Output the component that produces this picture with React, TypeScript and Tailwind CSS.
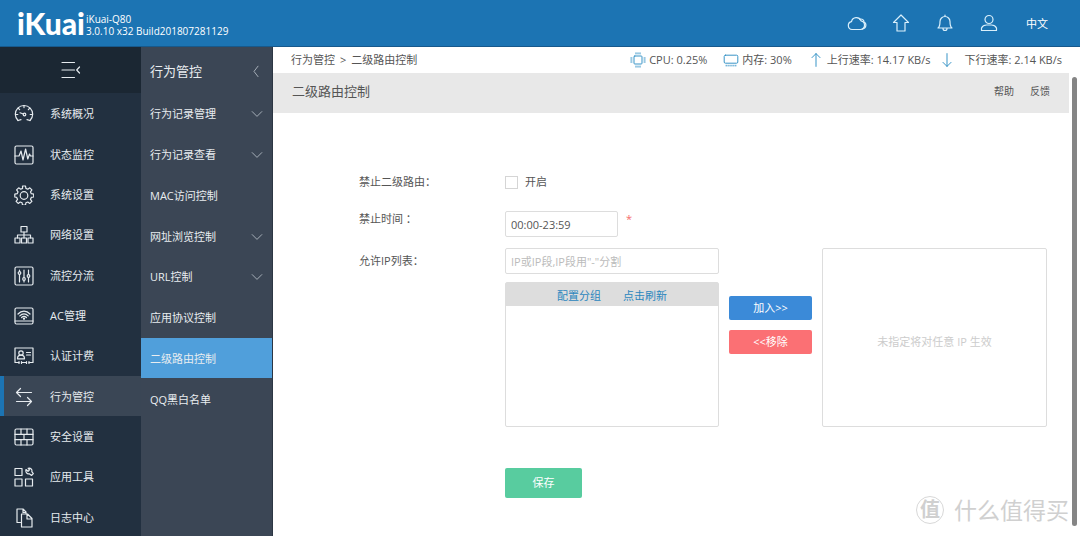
import { ReactNode, useState } from 'react';
import clsx from 'clsx';

type IconProps = { children: ReactNode; className?: string };

const Icon = ({ children, className = 'size-5' }: IconProps) => (
  <svg
    className={clsx('shrink-0', className)}
    viewBox="0 0 20 20"
    fill="none"
    stroke="currentColor"
    strokeWidth="1.2"
    strokeLinecap="round"
    strokeLinejoin="round"
    aria-hidden="true"
  >
    {children}
  </svg>
);

const subTitle = '行为管控';

const mainMenu: { label: string; icon: ReactNode }[] = [
  {
    label: '系统概况',
    icon: (
      <>
        <path d="M4 16.5a8.700 8.700 0 1 1 12 0" />
        <path d="M4 16.500l3-.8M16 16.500l-3-.8M1.600 10.500h2.200M16.200 10.500h2.200M10 1.600v2M4.200 4.200l1.400 1.500M15.800 4.200l-1.400 1.500" />
        <circle cx="10.500" cy="10.500" r="1.300" />
        <path d="M9.300 10L6 8.800" />
      </>
    ),
  },
  {
    label: '状态监控',
    icon: (
      <>
        <rect x="1" y="1" width="18" height="18" rx="1.500" />
        <path d="M1 11h4l2-5 2 9 2.600-11 2.200 10 1.700-5 1 2h2.500" />
      </>
    ),
  },
  {
    label: '系统设置',
    icon: (
      <>
        <path d="M8.500 1h3l.4 2.400 1.900.8 2-1.400 2.100 2.100-1.400 2 .8 1.800 2.400.4v2.900l-2.400.4-.8 1.900 1.400 2-2.100 2.100-2-1.400-1.900.8-.4 2.300h-3l-.4-2.300-1.900-.8-2 1.400-2.100-2.100 1.400-2-.8-1.900L.8 12V9.100l2.400-.4.8-1.800-1.400-2 2.100-2.100 2 1.400 1.900-.8z" />
        <circle cx="10" cy="10.500" r="3.800" />
      </>
    ),
  },
  {
    label: '网络设置',
    icon: (
      <>
        <rect x="7" y="1.500" width="6" height="5.500" />
        <path d="M10 7v6M3.500 13v-3h13v3" />
        <rect x="1" y="13" width="5" height="5" />
        <rect x="7.500" y="13" width="5" height="5" />
        <rect x="14" y="13" width="5" height="5" />
      </>
    ),
  },
  {
    label: '流控分流',
    icon: (
      <>
        <rect x="1" y="1" width="18" height="18" rx="1.500" />
        <path d="M5.500 4v1.500M5.500 8.500V16M10 4v7.500M10 14.500V16M14.500 4v4.500M14.500 11.500V16" />
        <circle cx="5.500" cy="7" r="1.300" />
        <circle cx="10" cy="13" r="1.300" />
        <circle cx="14.500" cy="10" r="1.300" />
      </>
    ),
  },
  {
    label: 'AC管理',
    icon: (
      <>
        <rect x="1" y="2" width="18" height="16" rx="1.500" />
        <path d="M1 15h18M4 8c3.500-3.800 8.500-3.800 12 0M5.800 9.800c2.500-2.600 5.900-2.600 8.400 0M7.600 11.500c1.500-1.500 3.300-1.500 4.800 0" />
        <circle cx="10" cy="12.600" r=".6" fill="currentColor" />
      </>
    ),
  },
  {
    label: '认证计费',
    icon: (
      <>
        <path d="M5 16.500H1V2h18v14.500h-4M7.500 16.500h5" />
        <path d="M5 15.500v2M7.500 15.500v2M12.500 15.500v2M15 15.500v2M12.500 6.500h4M12.500 9h4" />
        <circle cx="7" cy="7" r="2.200" />
        <path d="M3.500 12.800c0-4.800 7-4.800 7 0z" />
      </>
    ),
  },
  {
    label: '行为管控',
    icon: <path d="M17.500 5.500H2.500M6.500 1.500l-4 4 4 4M2.500 14.500h15M13.500 10.500l4 4-4 4" />,
  },
  {
    label: '安全设置',
    icon: (
      <>
        <rect x="1" y="2" width="18" height="16" rx="1.500" />
        <path d="M1 7.300h18M1 12.700h18M7 2v5.300M13 2v5.300M10 7.300v5.400M7 12.700V18M13 12.700V18" />
      </>
    ),
  },
  {
    label: '应用工具',
    icon: (
      <>
        <rect x="1" y="1.500" width="7" height="7" />
        <rect x="1" y="12" width="7" height="7" />
        <rect x="11.500" y="12" width="7" height="7" />
        <path d="M12 2.500l2 1.800 1.500-1.500-1.300-1.500c2.500-.6 4.300 1.200 3.600 3.400l1.500 2-1.800 1.800-2.200-1.700c-2.200.6-4-1.500-3.300-4.300z" />
      </>
    ),
  },
  {
    label: '日志中心',
    icon: (
      <>
        <path d="M6.500 14.500H3V1h6l3 3v1.500M9 1v3.500h3" />
        <path d="M7.500 6h6l4.500 4.500V19H7.500zM13 6v5h5" />
      </>
    ),
  },
];

const subMenu = [
  { label: '行为记录管理', expandable: true },
  { label: '行为记录查看', expandable: true },
  { label: 'MAC访问控制' },
  { label: '网址浏览控制', expandable: true },
  { label: 'URL控制', expandable: true },
  { label: '应用协议控制' },
  { label: '二级路由控制' },
  { label: 'QQ黑白名单' },
];

const Header = () => (
  <header className="flex h-[47px] shrink-0 items-center border-b border-[#17598c] bg-[#1c74b3] pr-8 pl-[17px] text-white">
    <div className="w-[66px] font-['Lato'] text-[30px] leading-8 font-black">iKuai</div>
    <div className="ml-[3px] pt-1 text-[10px] leading-3">
      <div>iKuai-Q80</div>
      <div>3.0.10 x32 Build201807281129</div>
    </div>
    <nav className="ml-auto flex items-center gap-6 text-[#d9effb]">
      <button type="button" aria-label="云">
        <Icon>
          <path d="M5 16.500a4 4 0 0 1-.5-7.900 5 5 0 0 1 9.500-.8 4.400 4.400 0 0 1-.5 8.700z" />
          <path d="M12.500 6.200c3-.8 4.500 1 4.600 3 2.600 1 2.600 5.800-1.600 6.800" />
        </Icon>
      </button>
      <button type="button" aria-label="升级">
        <Icon>
          <path d="M10 2l7.500 7.500H14V18H6V9.500H2.500z" />
        </Icon>
      </button>
      <button type="button" aria-label="通知">
        <Icon>
          <path d="M10 2v1.500M3 15c2-1.500 2-3.500 2-6.500a5 5 0 0 1 10 0c0 3 0 5 2 6.500zM8 15.500a2 2 0 0 0 4 0" />
        </Icon>
      </button>
      <button type="button" aria-label="用户">
        <Icon>
          <circle cx="10" cy="6.500" r="4" />
          <path d="M2.500 17.500v-2.500c1.500-3 3-3 5-3h5c2 0 3.500 0 5 3v2.500z" />
        </Icon>
      </button>
      <button type="button" className="pt-[2px] pl-[3px] text-[11px] text-white">
        中文
      </button>
    </nav>
  </header>
);

const MainNav = () => (
  <aside className="w-[141px] shrink-0 overflow-hidden bg-[#223040] text-[#e6ebef]">
    <button type="button" aria-label="收起菜单" className="flex h-[46px] w-full items-center justify-center bg-[#1b2733]">
      <Icon>
        <path d="M1 2.500h12.500M1 10h12.500M1 17.500h12.500M18.500 7l-2.800 3 2.800 3" />
      </Icon>
    </button>
    <ul className="flex h-[444px] flex-col">
      {mainMenu.map(({ label, icon }) => (
        <li key={label} className="flex-1">
          <a
            href="#"
            className={clsx(
              'flex h-full items-center gap-4 border-l-4 pt-[2px] pl-[10px]',
              label === subTitle ? 'border-[#1c74b3] bg-[#3a4655]' : 'border-transparent',
            )}
          >
            <Icon>{icon}</Icon>
            {label}
          </a>
        </li>
      ))}
    </ul>
  </aside>
);

const SubNav = () => (
  <aside className="w-[132px] shrink-0 overflow-hidden border-r border-[#2c3643] bg-[#3b4655] text-[#e9edf0]">
    <div className="flex h-[46px] items-center justify-between pt-[2px] pr-2 pl-[9px] text-[13px]">
      {subTitle}
      <button type="button" aria-label="返回" className="text-[#aab3bc]">
        <Icon className="size-4">
          <path d="M12.500 4l-5 6.500 5 6.500" />
        </Icon>
      </button>
    </div>
    <ul className="flex h-[326px] flex-col">
      {subMenu.map(({ label, expandable }) => (
        <li key={label} className="flex-1">
          <a
            href="#"
            className={clsx(
              'flex h-full items-center justify-between pt-[2px] pr-[7px] pl-[9px]',
              label === '二级路由控制' && 'bg-[#509fdb]',
            )}
          >
            {label}
            {expandable && (
              <Icon className="size-4 text-[#aab3bc]">
                <path d="M4 7l6 6 6-6" />
              </Icon>
            )}
          </a>
        </li>
      ))}
    </ul>
  </aside>
);

const StatusBar = () => (
  <div className="flex h-[26px] shrink-0 items-center pr-[18px] pl-[18px] whitespace-nowrap">
    <div className="flex gap-[5px]">
      <span>行为管控</span>
      <span>&gt;</span>
      <span>二级路由控制</span>
    </div>
    <div className="ml-auto flex items-center gap-4">
      <div className="flex items-center gap-[3px]">
        <Icon className="size-4 text-[#2f8fc4]">
          <rect x="5" y="5" width="10" height="10" rx="1" />
          <path d="M7.500 1v1.500M10 1v1.500M12.500 1v1.500M7.500 17.500V19M10 17.500V19M12.500 17.500V19M1 7.500h1.500M1 10h1.500M1 12.500h1.500M17.500 7.500H19M17.500 10H19M17.500 12.500H19" />
        </Icon>
        CPU: 0.25%
      </div>
      <div className="flex items-center gap-[3px]">
        <Icon className="size-4 text-[#2f8fc4]">
          <rect x="1.500" y="4" width="17" height="10" rx="1.500" />
          <path d="M4 16.500v1M6.400 16.500v1M8.800 16.500v1M11.200 16.500v1M13.600 16.500v1M16 16.500v1" />
        </Icon>
        内存: 30%
      </div>
      <div className="flex items-center gap-[3px]">
        <Icon className="size-4 text-[#2f8fc4]">
          <path d="M10 18V2M5 7l5-5 5 5" />
        </Icon>
        上行速率: 14.17 KB/s
      </div>
      <div className="-ml-2 flex items-center gap-[10px]">
        <Icon className="size-4 text-[#2f8fc4]">
          <path d="M10 2v16M5 13l5 5 5-5" />
        </Icon>
        下行速率: 2.14 KB/s
      </div>
    </div>
  </div>
);

const RouterForm = () => {
  const [enabled, setEnabled] = useState(false);
  const [time, setTime] = useState('00:00-23:59');
  const [ip, setIp] = useState('');

  return (
    <form className="flex flex-col pt-[60px] pr-[22px] pl-[86px]" onSubmit={(e) => e.preventDefault()}>
      <div className="flex h-[18px] items-center">
        <label htmlFor="enabled" className="w-[146px]">
          禁止二级路由：
        </label>
        <input
          id="enabled"
          type="checkbox"
          className="size-[13px] appearance-none border border-[#d5d5d5] bg-white checked:bg-[#3b8ad8]"
          checked={enabled}
          onChange={(e) => setEnabled(e.target.checked)}
        />
        <label htmlFor="enabled" className="ml-[7px]">
          开启
        </label>
      </div>
      <div className="mt-5 flex">
        <label htmlFor="time" className="w-[146px]">
          禁止时间 ：
        </label>
        <input
          id="time"
          className="h-[26px] w-[113px] rounded-xs border border-[#ddd] px-[5px]"
          value={time}
          onChange={(e) => setTime(e.target.value)}
        />
        <span className="ml-2 text-[#f56c6c]">*</span>
      </div>
      <div className="mt-[11px] flex">
        <label htmlFor="ip" className="w-[146px] pt-[5px]">
          允许IP列表：
        </label>
        <div className="flex w-[214px] flex-col gap-2">
          <input
            id="ip"
            className="h-[26px] rounded-xs border border-[#ddd] px-[5px] placeholder:text-[#bbb]"
            placeholder={'IP或IP段,IP段用"-"分割'}
            value={ip}
            onChange={(e) => setIp(e.target.value)}
          />
          <div className="h-[145px] rounded-xs border border-[#ddd]">
            <div className="flex h-[23px] items-center justify-center gap-[22px] bg-[#ddd] pt-[2px] text-[#2b86bd]">
              <a href="#">配置分组</a>
              <a href="#">点击刷新</a>
            </div>
          </div>
        </div>
        <div className="mx-[10px] flex w-[83px] flex-col gap-[10px] pt-12 text-white">
          <button type="button" className="h-6 rounded-xs bg-[#3b8ad8]">
            加入&gt;&gt;
          </button>
          <button type="button" className="h-6 rounded-xs bg-[#fb7074]">
            &lt;&lt;移除
          </button>
        </div>
        <div className="flex flex-1 items-center justify-center rounded-xs border border-[#ddd] pt-2 text-[#ccc]">
          未指定将对任意 IP 生效
        </div>
      </div>
      <button type="submit" className="mt-[41px] ml-[146px] h-[30px] w-[77px] rounded-xs bg-[#58cc9f] text-white">
        保存
      </button>
    </form>
  );
};

const App = () => (
  <div className="relative flex h-screen flex-col overflow-hidden bg-white font-['Open_Sans','Noto_Sans_CJK_SC',sans-serif] text-[11px] leading-4 text-[#555]">
    <Header />
    <div className="flex min-h-0 flex-1">
      <MainNav />
      <SubNav />
      <main className="flex min-w-0 flex-1 flex-col">
        <StatusBar />
        <div className="flex min-h-0 flex-1">
          <div className="min-w-0 flex-1">
            <div className="flex h-10 items-center bg-[#e8e8e8] pr-[19px] pb-1 pl-[19px]">
              <h1 className="text-[13px]">二级路由控制</h1>
              <div className="ml-auto flex gap-4 text-[10px]">
                <a href="#">帮助</a>
                <a href="#">反馈</a>
              </div>
            </div>
            <RouterForm />
          </div>
          <div className="mt-1 mr-[3px] mb-[10px] ml-[3px] w-[5px] rounded-full bg-[#858585]" />
        </div>
      </main>
    </div>
    <div className="absolute right-[11px] bottom-3 flex items-center gap-[10px] text-[23px] leading-7 text-[#d0d0d0]">
      <span className="flex size-7 items-center justify-center rounded-full border border-[#d8d8d8] text-xl font-bold">
        值
      </span>
      什么值得买
    </div>
  </div>
);

export default App;
